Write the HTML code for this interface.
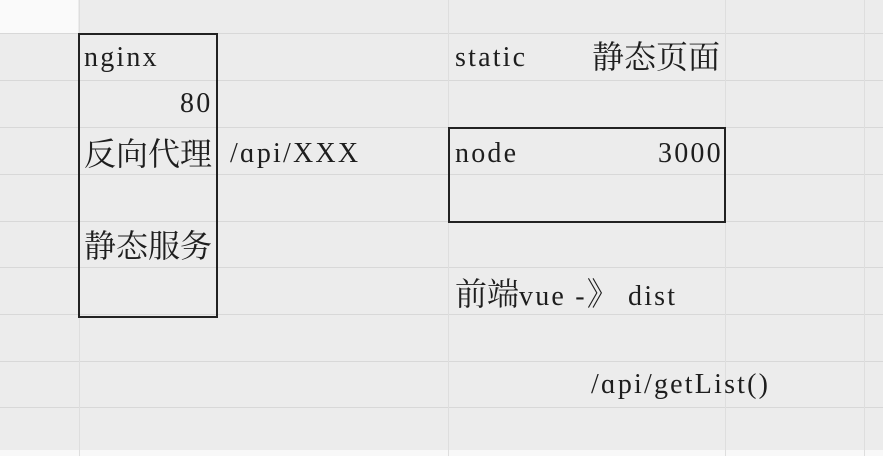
<!DOCTYPE html>
<html><head><meta charset="utf-8"><style>
body{margin:0;width:883px;height:456px;background:#ececec;position:relative;overflow:hidden;font-family:"Liberation Serif","Noto Serif CJK SC",serif;color:#1e1e1e}
.h{position:absolute;left:0;width:883px;height:1px;background:#d8d8d8}
.v{position:absolute;top:0;height:456px;width:1px;background:#dedede}
.t{position:absolute;font-size:28px;letter-spacing:2.2px;white-space:nowrap;line-height:30px}
.c{font-size:32px;letter-spacing:0}
.box{position:absolute;border:2px solid #222}
</style></head><body>
<div style="position:absolute;left:0;top:0;width:78px;height:33px;background:#fafafa"></div>
<div class="h" style="top:33px"></div><div class="h" style="top:80px"></div><div class="h" style="top:127px"></div><div class="h" style="top:174px"></div><div class="h" style="top:221px"></div><div class="h" style="top:267px"></div><div class="h" style="top:314px"></div><div class="h" style="top:361px"></div><div class="h" style="top:407px"></div><div class="h" style="top:450px;background:#f8f8f8;height:6px"></div>
<div class="v" style="left:79px"></div><div class="v" style="left:448px"></div><div class="v" style="left:725px"></div><div class="v" style="left:864px"></div>
<div class="box" style="left:78px;top:33px;width:136px;height:281px"></div>
<div class="box" style="left:448px;top:127px;width:274px;height:92px"></div>
<div class="t" style="left:84px;top:43px">nginx</div>
<div class="t" style="left:180px;top:89px">80</div>
<div class="t c" style="left:84px;top:139px">反向代理</div>
<div class="t" style="left:230px;top:139px">/ɑpi/XXX</div>
<div class="t c" style="left:84px;top:231px">静态服务</div>
<div class="t" style="left:455px;top:43px">static</div>
<div class="t c" style="left:592px;top:42px">静态页面</div>
<div class="t" style="left:455px;top:139px">node</div>
<div class="t" style="left:658px;top:139px">3000</div>
<div class="t" style="left:455px;top:279px"><span class="c">前端</span>vue -<span class="c">》</span> dist</div>
<div class="t" style="left:591px;top:370px">/ɑpi/getList()</div>
</body></html>
